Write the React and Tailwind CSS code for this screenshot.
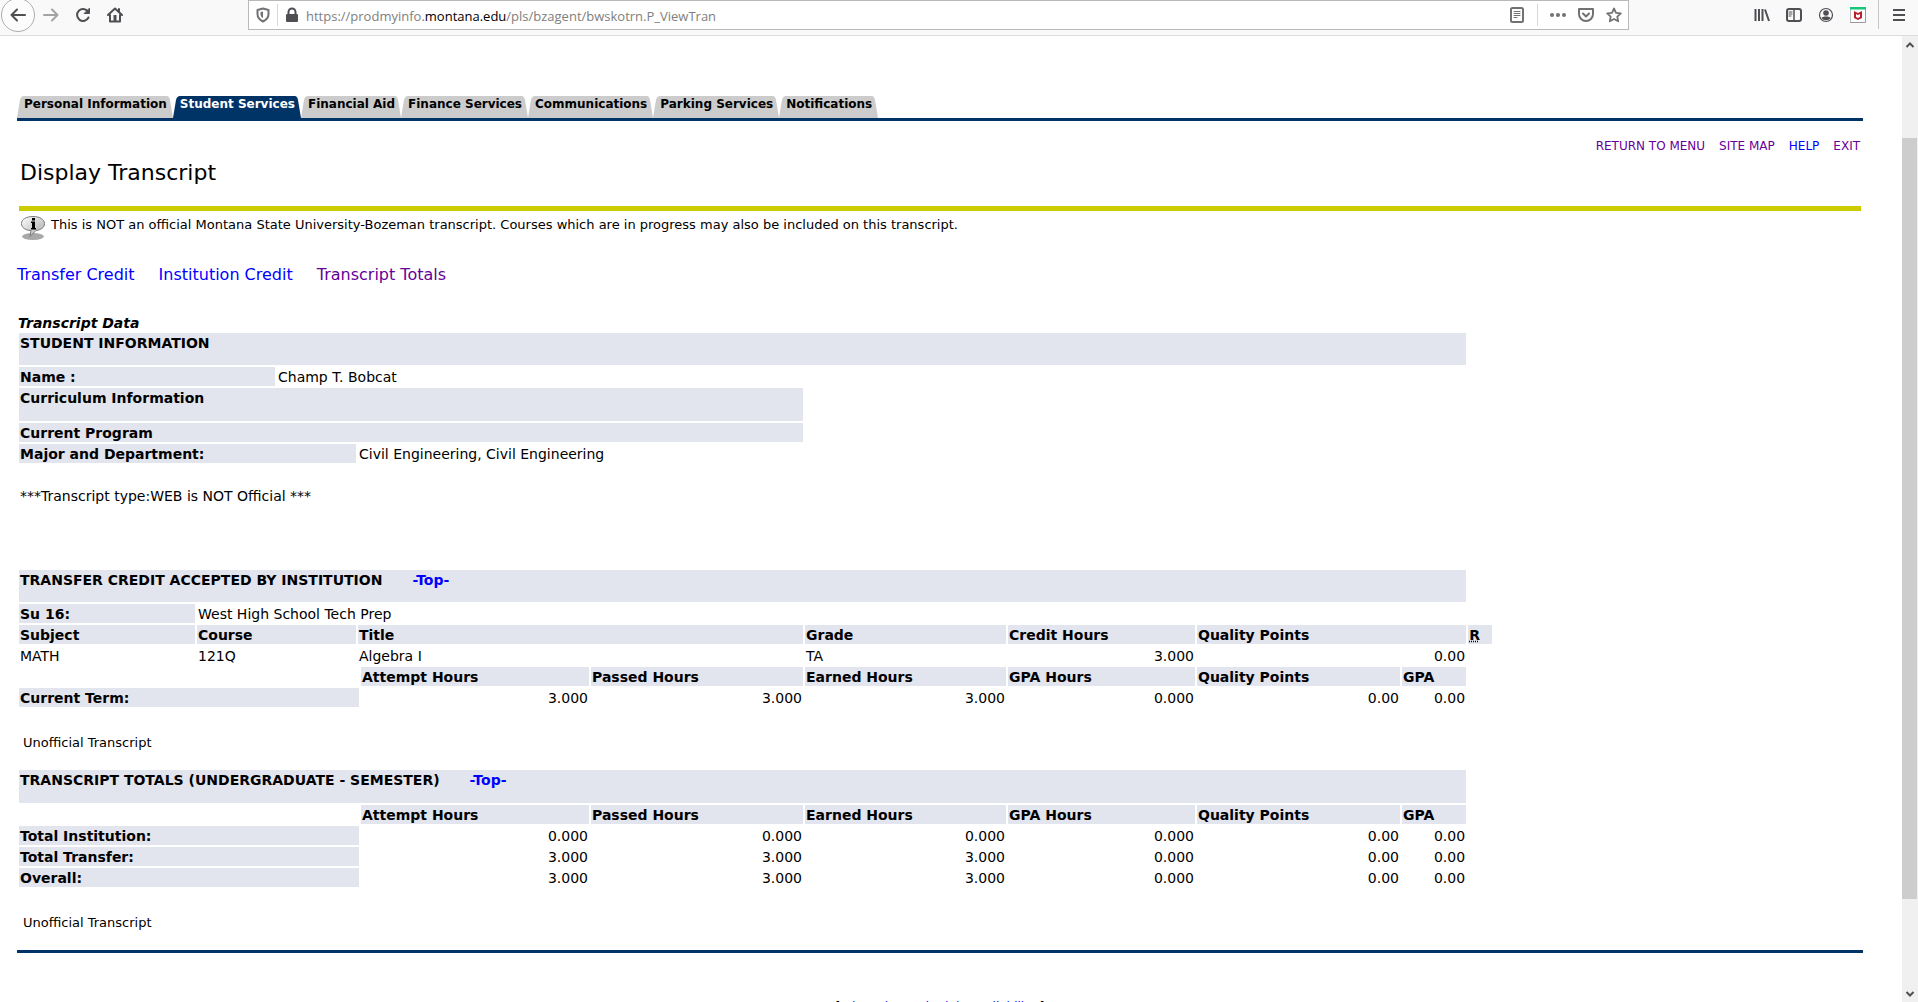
import { useState } from "react";

const tabs = [
    "Personal Information",
    "Student Services",
    "Financial Aid",
    "Finance Services",
    "Communications",
    "Parking Services",
    "Notifications",
];

const columns = [
    "w-[176px]",
    "w-[78px]",
    "w-[79px]",
    "w-px",
    "w-[228px]",
    "w-[212px]",
    "w-[201px]",
    "w-[187px]",
    "w-[203px]",
    "w-[64px]",
    "w-[24px]",
];

const totals = [
    { label: "Total Institution:", values: ["0.000", "0.000", "0.000", "0.000", "0.00", "0.00"] },
    { label: "Total Transfer:", values: ["3.000", "3.000", "3.000", "0.000", "0.00", "0.00"] },
    { label: "Overall:", values: ["3.000", "3.000", "3.000", "0.000", "0.00", "0.00"] },
];

const hourHeadings = [
    "Attempt Hours",
    "Passed Hours",
    "Earned Hours",
    "GPA Hours",
    "Quality Points",
    "GPA",
];


function Icon({ children, className = "" }) {
    return (
        <svg
            viewBox="0 0 16 16"
            fill="none"
            stroke="#4f4f53"
            strokeWidth="2"
            strokeLinecap="round"
            strokeLinejoin="round"
            className={`size-4 ${className}`}
            aria-hidden="true"
        >
            {children}
        </svg>
    );
}


// Browser toolbar
function Toolbar() {
    return (
        <header className="flex h-9 shrink-0 items-start border-b border-[#dcdcdc] bg-[#f9f9fa] pl-px">

            <div className="flex h-[30px] w-[247px] items-center">

                <button
                    aria-label="Back"
                    className="flex size-[34px] shrink-0 items-center justify-center rounded-full border border-[#aeaeae] bg-[#fcfcfc]"
                >
                    <Icon><path d="M15 8H1.5M7 2.5 1.5 8 7 13.5" /></Icon>
                </button>

                <button aria-label="Forward" className="ml-2">
                    <Icon className="opacity-50"><path d="M1 8h13.5M9 2.5 14.5 8 9 13.5" /></Icon>
                </button>

                <button aria-label="Reload" className="ml-4">
                    <Icon>
                        <path d="M13.5 10.5A6 6 0 1 1 13 4.5" />
                        <path d="M14.5 1.5v5h-5z" fill="#4f4f53" strokeWidth="1" />
                    </Icon>
                </button>

                <button aria-label="Home" className="ml-4">
                    <Icon>
                        <path d="M1 8 8 1.5 15 8M3 8v6.5h10V8" />
                        <path d="M8 8v6" strokeWidth="3" strokeLinecap="butt" />
                        <path d="M12 2v3" />
                    </Icon>
                </button>

            </div>


            <div className="flex h-[30px] w-[1381px] min-w-0 items-center border border-[#b9b9b9] bg-white px-1.5">

                <button aria-label="Tracking protection">
                    <Icon className="opacity-80">
                        <path d="M8 1.5 13.5 3v4c0 4-2.500 6-5.500 7.500C5 13 2.500 11 2.500 7V3z" />
                        <path d="M8 4.500v6.500C6 10 5.500 8.500 5.500 7V5z" fill="#4f4f53" strokeWidth="0" />
                    </Icon>
                </button>

                <span className="ml-1.5 h-[22px] w-px bg-[#d7d7db]"></span>

                <button aria-label="Site information" className="ml-1.5">
                    <Icon>
                        <path d="M4.500 8V5a3.500 3.500 0 0 1 7 0v3" />
                        <rect x="3" y="8" width="10" height="6" fill="#4f4f53" />
                    </Icon>
                </button>

                <div
                    role="textbox"
                    aria-label="Address"
                    className="ml-1.5 min-w-0 flex-1 truncate pt-0.5 font-['Open_Sans',sans-serif] text-[13px] leading-5 text-[#808080]"
                >
                    https://prodmyinfo.<span className="text-black">montana.edu</span>/pls/bzagent/bwskotrn.P_ViewTran
                </div>

                <button aria-label="Reader view">
                    <Icon className="opacity-80">
                        <rect x="2" y="1" width="12" height="14" rx="1.500" />
                        <path d="M5 4.500h6M5 6.500h6M5 8.500h6M5 10.500h3" strokeWidth="1" />
                    </Icon>
                </button>

                <span className="ml-3 h-[22px] w-px bg-[#d7d7db]"></span>

                <button aria-label="Page actions" className="ml-3">
                    <Icon className="opacity-80">
                        <g fill="#4f4f53" stroke="none">
                            <circle cx="2" cy="8" r="2" />
                            <circle cx="8" cy="8" r="2" />
                            <circle cx="14" cy="8" r="2" />
                        </g>
                    </Icon>
                </button>

                <button aria-label="Save to Pocket" className="ml-3">
                    <Icon className="opacity-80">
                        <path d="M1 2h14v5a7 7 0 0 1-14 0z" />
                        <path d="M5 6.500 8 9.500l3-3" />
                    </Icon>
                </button>

                <button aria-label="Bookmark" className="ml-3">
                    <Icon className="opacity-80">
                        <path d="m8 1.500 2 4.300 4.800.6-3.500 3.200.9 4.700L8 12l-4.200 2.300.9-4.700L1.200 6.400 6 5.800z" strokeWidth="1.800" />
                    </Icon>
                </button>

            </div>


            <div className="flex h-[30px] flex-1 items-center justify-end gap-4 pr-[11px]">

                <button aria-label="Library">
                    <Icon>
                        <path d="M1.500 2v12M5 2v12M8.500 2v12M11 2.500 15 14" strokeLinecap="butt" />
                    </Icon>
                </button>

                <button aria-label="Sidebars">
                    <Icon>
                        <rect x="1" y="2" width="14" height="12" rx="2" />
                        <path d="M8 2v12" strokeWidth="1.500" />
                        <path d="M3 5h3M3 7h3M3 9h2" strokeWidth="1" />
                    </Icon>
                </button>

                <button aria-label="Account">
                    <Icon>
                        <circle cx="8" cy="8" r="6.500" strokeWidth="1.200" />
                        <circle cx="8" cy="6" r="2.800" fill="#4f4f53" stroke="none" />
                        <path d="M3.500 11c1-2 8-2 9 0-2 3-7 3-9 0z" fill="#4f4f53" stroke="none" />
                    </Icon>
                </button>

                <button aria-label="McAfee WebAdvisor">
                    <Icon>
                        <rect x="0.500" y="0.500" width="15" height="15" fill="white" stroke="#9a9a9a" strokeWidth="1" />
                        <path d="M0 0h16v2.500H0z" fill="#10c878" stroke="none" />
                        <path d="m4 4 4 2 4-2v7l-4 2-4-2zM6 7v3l2 1 2-1V7L8 8z" fill="#b7202a" fillRule="evenodd" stroke="none" />
                    </Icon>
                </button>

                <span className="-mx-1 -mt-1 h-8 w-px bg-[#c4c4c4]"></span>

                <button aria-label="Open menu">
                    <Icon>
                        <path d="M2 3h12M2 8h12M2 13h12" strokeLinecap="butt" />
                    </Icon>
                </button>

            </div>

        </header>
    );
}


function Tab({ label, active, onClick }) {

    const fill = active ? "fill-[#003366]" : "fill-[#cccccc]";

    return (
        <li className="flex h-[22px]">

            <svg viewBox="0 0 7 22" className={`w-[7px] ${fill}`} aria-hidden="true">
                <path d="M0 22 3 4Q4 0 7 0v22z" />
            </svg>

            <button
                onClick={onClick}
                className={
                    active
                    ? "bg-[#003366] pb-1.5 text-xs leading-4 font-bold text-white"
                    : "bg-[#cccccc] pb-1.5 text-xs leading-4 font-bold text-black"
                }
            >
                {label}
            </button>

            <svg viewBox="0 0 6 22" className={`w-1.5 ${fill}`} aria-hidden="true">
                <path d="M6 22 3 4Q2 0 0 0v22z" />
            </svg>

        </li>
    );
}


function Label({ children, className = "", ...rest }) {
    return (
        <th className={`bg-[#e2e4ee] px-px pt-0.5 text-left align-top font-bold ${className}`} {...rest}>
            {children}
        </th>
    );
}


function Cell({ children, className = "", ...rest }) {
    return (
        <td className={`px-px pt-0.5 align-top ${className}`} {...rest}>
            {children}
        </td>
    );
}


function HoursHeader() {
    return (
        <tr>
            <td colSpan={4}></td>
            {hourHeadings.map((heading) => (
                <Label key={heading} scope="col">{heading}</Label>
            ))}
        </tr>
    );
}


function HoursRow({ label, values }) {
    return (
        <tr>
            <Label colSpan={4} scope="row">{label}</Label>
            {values.map((value, index) => (
                <Cell key={index} className="text-right">{value}</Cell>
            ))}
        </tr>
    );
}


function TranscriptTable() {
    return (
        <table className="w-4/5 table-fixed border-separate border-spacing-x-0.5 border-spacing-y-0.5 text-sm leading-[17px]">

            <caption className="pl-px text-left leading-4 font-bold italic">Transcript Data</caption>

            <colgroup>
                {columns.map((width, index) => (
                    <col key={index} className={width} />
                ))}
            </colgroup>

            <tbody>

                <tr className="h-8">
                    <Label colSpan={10}>STUDENT INFORMATION</Label>
                </tr>

                <tr>
                    <Label colSpan={2} scope="row">Name :</Label>
                    <Cell colSpan={8}>Champ T. Bobcat</Cell>
                </tr>

                <tr className="h-[33px]">
                    <Label colSpan={6}>Curriculum Information</Label>
                </tr>

                <tr>
                    <Label colSpan={6}>Current Program</Label>
                </tr>

                <tr>
                    <Label colSpan={3} scope="row">Major and Department:</Label>
                    <Cell colSpan={7}>Civil Engineering, Civil Engineering</Cell>
                </tr>

                <tr className="h-[19px]">
                    <td colSpan={10}></td>
                </tr>

                <tr>
                    <Cell colSpan={10}>***Transcript type:WEB is NOT Official ***</Cell>
                </tr>

                <tr className="h-[61px]">
                    <td colSpan={10}></td>
                </tr>


                {/* Transfer credit */}
                <tr className="h-8">
                    <Label colSpan={10} id="transfer">
                        TRANSFER CREDIT ACCEPTED BY INSTITUTION
                        <a href="#top" className="ml-[30px] text-[#0000ff]">-Top-</a>
                    </Label>
                </tr>

                <tr>
                    <Label scope="row">Su 16:</Label>
                    <Cell colSpan={9}>West High School Tech Prep</Cell>
                </tr>

                <tr>
                    <Label scope="col">Subject</Label>
                    <Label scope="col" colSpan={2}>Course</Label>
                    <Label scope="col" colSpan={3}>Title</Label>
                    <Label scope="col">Grade</Label>
                    <Label scope="col">Credit Hours</Label>
                    <Label scope="col" colSpan={2}>Quality Points</Label>
                    <Label scope="col">
                        <abbr title="Repeat Status">R</abbr>
                    </Label>
                </tr>

                <tr>
                    <Cell>MATH</Cell>
                    <Cell colSpan={2}>121Q</Cell>
                    <Cell colSpan={3}>Algebra I</Cell>
                    <Cell>TA</Cell>
                    <Cell className="text-right">3.000</Cell>
                    <Cell colSpan={2} className="text-right">0.00</Cell>
                </tr>

                <HoursHeader />

                <HoursRow
                    label="Current Term:"
                    values={["3.000", "3.000", "3.000", "0.000", "0.00", "0.00"]}
                />

                <tr className="h-[59px]">
                    <td colSpan={10} className="px-1 pt-2 align-middle text-[13px]">Unofficial Transcript</td>
                </tr>


                {/* Transcript totals */}
                <tr className="h-[33px]">
                    <Label colSpan={10} id="totals">
                        TRANSCRIPT TOTALS (UNDERGRADUATE - SEMESTER)
                        <a href="#top" className="ml-[30px] text-[#0000ff]">-Top-</a>
                    </Label>
                </tr>

                <HoursHeader />

                {totals.map((row) => (
                    <HoursRow key={row.label} label={row.label} values={row.values} />
                ))}

                <tr className="h-[59px]">
                    <td colSpan={10} className="px-1 pt-2 align-middle text-[13px]">Unofficial Transcript</td>
                </tr>

            </tbody>

        </table>
    );
}


export default function App() {

    const [activeTab, setActiveTab] = useState("Student Services");

    return (

        <div className="flex h-screen flex-col overflow-hidden bg-white font-[Verdana,'DejaVu_Sans',sans-serif] text-black">

            <Toolbar />

            <div className="flex min-h-0 flex-1">

                <main id="top" className="min-w-0 flex-1 overflow-hidden pt-[60px] pr-[39px] pl-[17px]">

                    <ul className="flex border-b-[3px] border-[#003366]">
                        {tabs.map((tab) => (
                            <Tab
                                key={tab}
                                label={tab}
                                active={tab === activeTab}
                                onClick={() => setActiveTab(tab)}
                            />
                        ))}
                    </ul>


                    <nav className="mt-[17px] flex justify-end gap-3.5 pr-[3px] text-xs leading-4 text-[#660099]">
                        <a href="#menu">RETURN TO MENU</a>
                        <a href="#sitemap">SITE MAP</a>
                        <a href="#help" className="text-[#0000ff]">HELP</a>
                        <a href="#exit">EXIT</a>
                    </nav>


                    <h1 className="mt-[5px] pl-[3px] text-[22px] leading-7">Display Transcript</h1>

                    <hr className="mt-[19px] mr-0.5 ml-0.5 border-t-[5px] border-[#cccc00]" />


                    <div className="mt-[5px] flex items-start pl-1">

                        <svg viewBox="0 0 24 25" className="h-[25px] w-6" aria-hidden="true">
                            <defs>
                                <linearGradient id="bubble" x1="0" y1="0" x2="1" y2="1">
                                    <stop offset="0" stopColor="#ffffff" />
                                    <stop offset="1" stopColor="#a8a8a8" />
                                </linearGradient>
                            </defs>
                            <ellipse cx="12" cy="20.500" rx="11" ry="3.500" fill="#a9a9a9" />
                            <path
                                d="M12 .5C5 .5 .5 3.500 .5 7.500s4 7 9.500 7l-1 6 6-6c5-.5 8.500-3 8.500-7s-4.500-7-11.500-7z"
                                fill="url(#bubble)"
                                stroke="#7a7a7a"
                            />
                            <path d="M11 2h3v2.500h-3zM10 5.500h4v6.500h1v1.500h-5v-1.500h1V7h-1z" fill="#000000" />
                        </svg>

                        <p className="ml-1.5 text-[13px] leading-[18px]">
                            This is NOT an official Montana State University-Bozeman transcript. Courses which are in progress may also be included on this transcript.
                        </p>

                    </div>


                    <nav className="mt-[22px] flex gap-6 text-base leading-6 text-[#0000ff]">
                        <a href="#transfer">Transfer Credit</a>
                        <a href="#institution">Institution Credit</a>
                        <a href="#totals" className="text-[#660099]">Transcript Totals</a>
                    </nav>


                    <div className="mt-7">
                        <TranscriptTable />
                    </div>


                    <hr className="border-t-[3px] border-[#003366]" />


                    <p className="mt-[46px] text-center text-xs leading-4 whitespace-nowrap">
                        [ <a href="#schedule" className="text-[#0000ff]">View Class Schedule Availability</a> ]
                    </p>

                </main>


                {/* Page scrollbar */}
                <div className="flex w-4 shrink-0 flex-col bg-[#f0f0f0]" aria-hidden="true">

                    <svg viewBox="0 0 16 18" className="h-[18px] w-4 fill-none stroke-[#505050] stroke-2">
                        <path d="m4.500 11 3.500-3.500 3.500 3.500" />
                    </svg>

                    <div className="flex flex-1 flex-col pt-[84px]">
                        <div className="mr-px h-9/10 bg-[#cdcdcd]"></div>
                    </div>

                    <svg viewBox="0 0 16 18" className="h-[18px] w-4 fill-none stroke-[#505050] stroke-2">
                        <path d="m4.500 8 3.500 3.500L11.500 8" />
                    </svg>

                </div>

            </div>

        </div>

    );
}
